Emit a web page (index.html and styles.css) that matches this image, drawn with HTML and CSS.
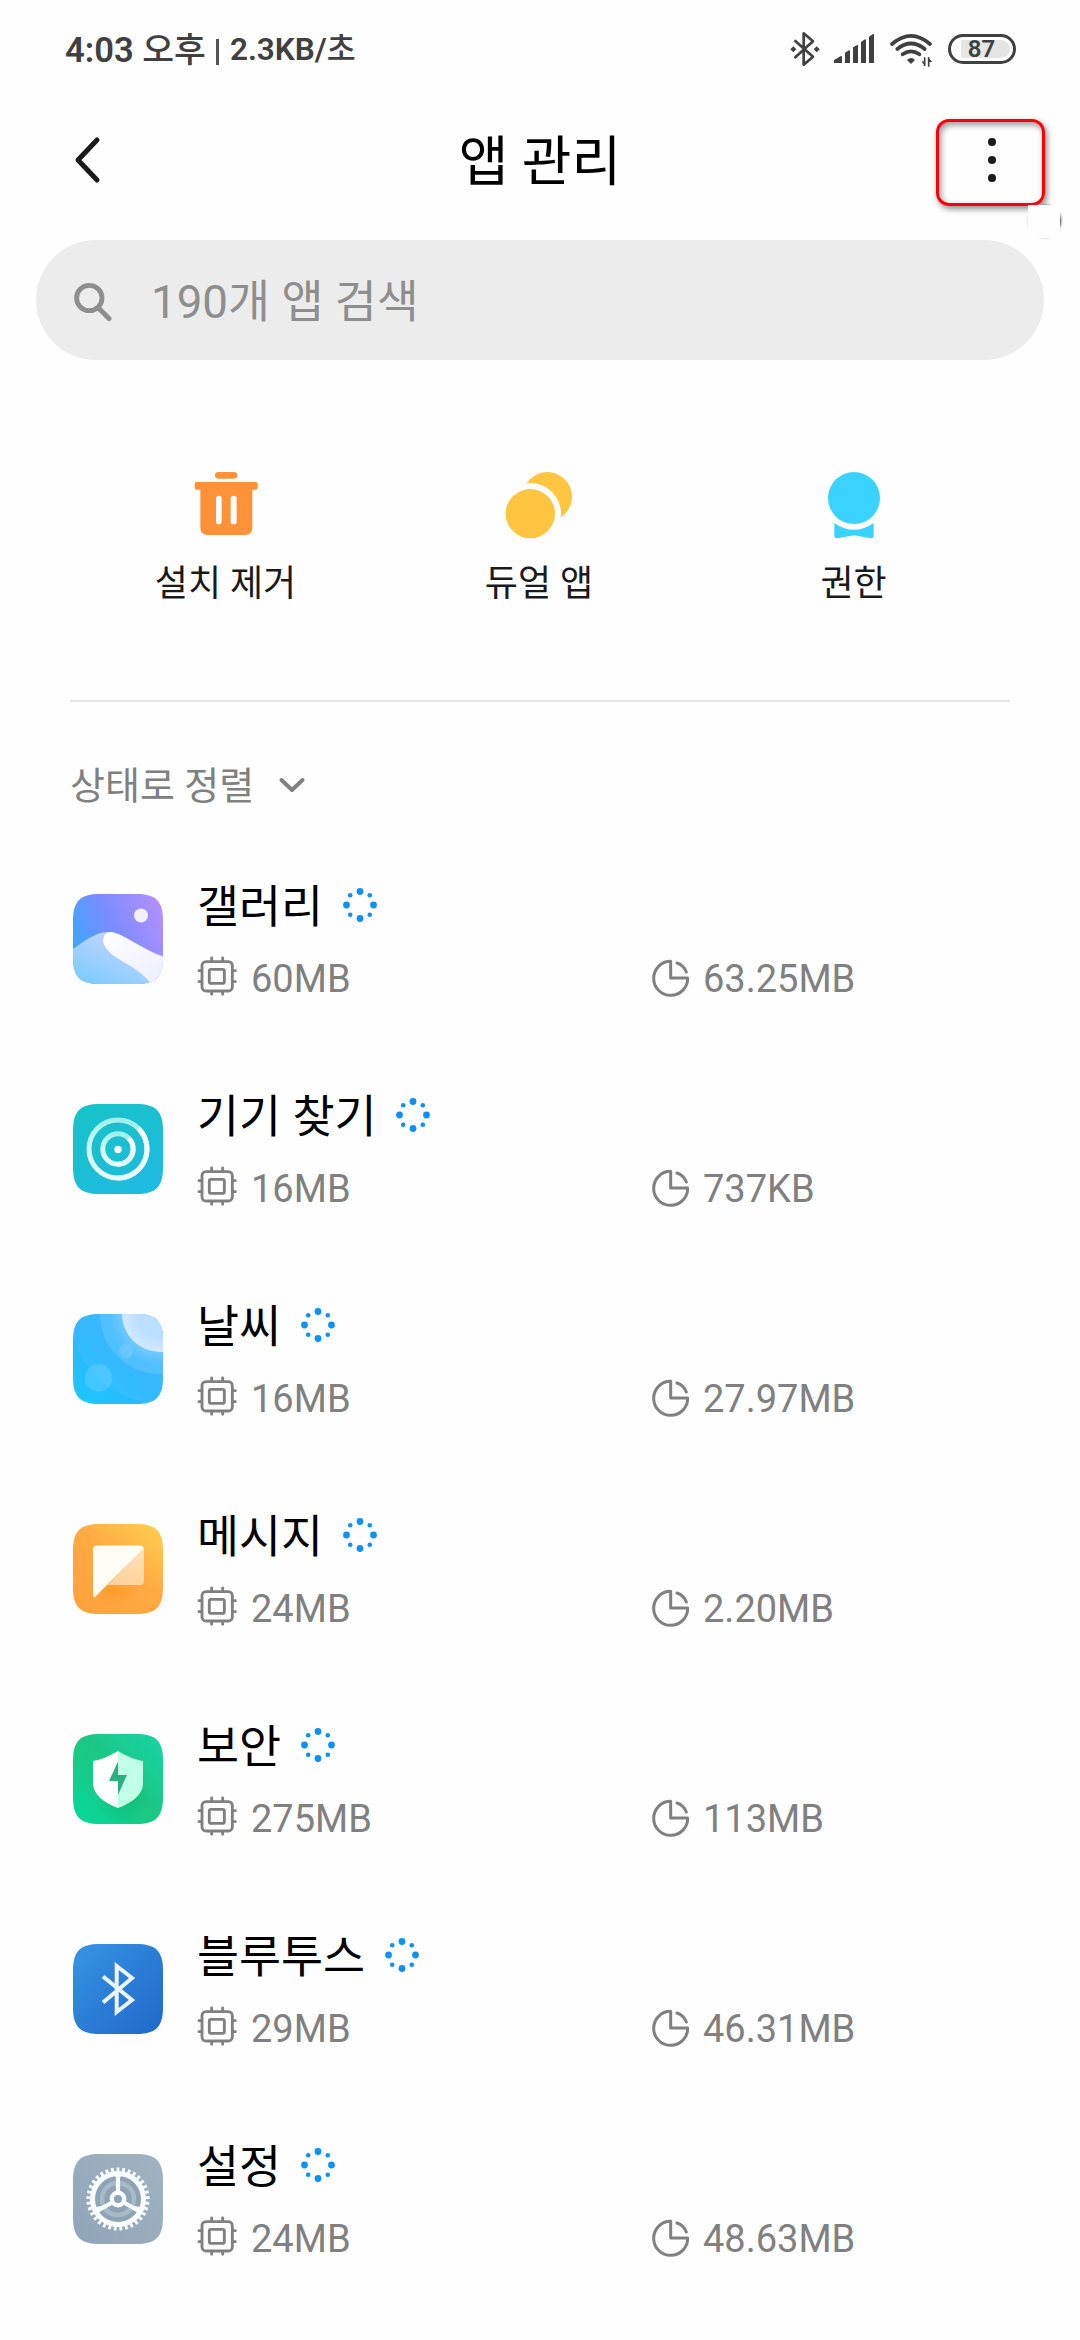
FILE: index.html
```html
<!DOCTYPE html>
<html lang="ko">
<head>
<meta charset="utf-8">
<title>앱 관리</title>
<link rel="stylesheet" href="styles.css">
</head>
<body>
<svg class="defs" aria-hidden="true">
  <defs>
    <symbol id="spin" viewBox="0 0 36 36">
      <g fill="#0d92f4"><circle cx="18" cy="4.5" r="3.4"/><circle cx="18" cy="31.5" r="3.4"/><circle cx="4.5" cy="18" r="3.4"/><circle cx="31.5" cy="18" r="3.4"/>
      <circle cx="8.2" cy="8.2" r="2.3"/><circle cx="27.8" cy="8.2" r="2.3"/><circle cx="8.2" cy="27.8" r="2.3"/><circle cx="27.8" cy="27.8" r="2.3"/></g>
    </symbol>
    <symbol id="chip" viewBox="441 829 120 120">
      <g fill="none" stroke="#808080" stroke-width="8.6" stroke-linecap="round">
        <rect x="456" y="846" width="91" height="88" rx="12"/><rect x="478" y="869" width="45" height="42" rx="5"/>
        <path d="M485 835V845M518 835V845M485 935V944M518 935V944M447 873H455M447 906H455M548 873H556M548 906H556"/>
      </g>
    </symbol>
    <symbol id="pie" viewBox="87 48 120 120">
      <g fill="none" stroke="#808080" stroke-width="9" stroke-linecap="round" stroke-linejoin="round">
        <path d="M152 61V111H203A51 51 0 1 1 152 61M171 66A46 46 0 0 1 199 93"/>
      </g>
    </symbol>
    <clipPath id="tile"><path d="M0 27C0 7 7 0 27 0H63C83 0 90 7 90 27V63C90 83 83 90 63 90H27C7 90 0 83 0 63Z"/></clipPath>
    <linearGradient id="gal" x1="0" y1=".55" x2="1" y2=".1"><stop offset="0" stop-color="#3da5ff"/><stop offset=".45" stop-color="#7c8cff"/><stop offset="1" stop-color="#b78fff"/></linearGradient>
    <linearGradient id="hill" x1="0" y1="1" x2=".8" y2="0"><stop offset="0" stop-color="#74caff"/><stop offset="1" stop-color="#d6d6ff"/></linearGradient>
    <linearGradient id="dune" x1="0" y1="0" x2=".6" y2="1"><stop offset="0" stop-color="#fff"/><stop offset="1" stop-color="#eef0ff"/></linearGradient>
    <linearGradient id="find" x1="0" y1="0" x2=".6" y2="1"><stop offset="0" stop-color="#16c3c8"/><stop offset=".5" stop-color="#1abfd0"/><stop offset="1" stop-color="#1dbbe0"/></linearGradient>
    <linearGradient id="ring" x1=".7" y1="0" x2=".4" y2="1"><stop offset="0" stop-color="#9eefe6"/><stop offset="1" stop-color="#e8fdff"/></linearGradient>
    <linearGradient id="ringB" x1="0" y1="0" x2="0" y2="1"><stop offset="0" stop-color="#fff"/><stop offset="1" stop-color="#e2fbff"/></linearGradient>
    <linearGradient id="sky" x1="0" y1="1" x2=".8" y2="0"><stop offset="0" stop-color="#1cc8ff"/><stop offset=".5" stop-color="#2ab6ff"/><stop offset="1" stop-color="#36b4ff"/></linearGradient>
    <linearGradient id="msg" x1=".2" y1="1" x2="1" y2="0"><stop offset="0" stop-color="#ffa23c"/><stop offset=".5" stop-color="#feaa43"/><stop offset="1" stop-color="#ffd150"/></linearGradient>
    <linearGradient id="fold" x1="0" y1="0" x2="0" y2="1"><stop offset="0" stop-color="#fee2bd"/><stop offset="1" stop-color="#fed29c"/></linearGradient>
    <linearGradient id="safe" x1="0" y1="1" x2="1" y2="0"><stop offset="0" stop-color="#04da9a"/><stop offset=".5" stop-color="#1cc684"/><stop offset="1" stop-color="#17d4a4"/></linearGradient>
    <linearGradient id="blue" x1="0" y1="0" x2="1" y2="1"><stop offset="0" stop-color="#3696e4"/><stop offset=".5" stop-color="#2b7dd6"/><stop offset="1" stop-color="#2069c8"/></linearGradient>
    <linearGradient id="set" x1="0" y1="1" x2="1" y2="0"><stop offset="0" stop-color="#90a5b8"/><stop offset="1" stop-color="#a0b3c2"/></linearGradient>
    <radialGradient id="shade"><stop offset="0" stop-color="#00a860" stop-opacity=".4"/><stop offset="1" stop-color="#00a860" stop-opacity="0"/></radialGradient>
    <radialGradient id="shadeO"><stop offset="0" stop-color="#ff8f10" stop-opacity=".45"/><stop offset="1" stop-color="#ff8f10" stop-opacity="0"/></radialGradient>
    <radialGradient id="sun" cx=".5" cy=".5" r=".5"><stop offset=".6" stop-color="#bcdfff"/><stop offset="1" stop-color="#d2eaff"/></radialGradient>
    <radialGradient id="glow"><stop offset=".65" stop-color="#8fd2ff" stop-opacity=".7"/><stop offset="1" stop-color="#8fd2ff" stop-opacity="0"/></radialGradient>
  </defs>
</svg>

<header class="status">
  <div class="clock"><span class="time">4:03 <span class="ko">오후</span></span><span class="bar"></span><span class="speed">2.3KB/<span class="ko">초</span></span></div>
  <div class="signals">
    <svg class="bt" viewBox="60 63 90 108"><path d="M76 93L129 140L101 164V70L129 94L76 142" fill="none" stroke="#404040" stroke-width="8" stroke-linejoin="round" stroke-linecap="round"/><path d="M61 118L70 109L79 118L70 127ZM131 118L140 109L149 118L140 127Z" fill="#404040"/></svg>
    <svg class="cell" viewBox="192 63 120 108"><path d="M192 159V150L213 138Q216 137 216 141V159ZM225 159V128L237 121Q240 120 240 124V159ZM249 159V112L261 105Q264 104 264 108V159ZM273 159V96L285 88Q288 87 288 91V159ZM297 159V80L309 72Q312 71 312 75V159Z" fill="#404040"/></svg>
    <svg class="wifi" viewBox="360 63 132 108"><g fill="none" stroke="#404040" stroke-width="11" stroke-linecap="round"><path d="M366 102Q423 53 480 102M382 117Q423 84 464 117M398 133Q423 115 448 133"/></g><path d="M411 150Q423 138 435 150L423 162Z" fill="#404040"/><path d="M464 142V168M476 142V170" stroke="#404040" stroke-width="5"/><path d="M455 155L465 168V152ZM474 142L487 156H474Z" fill="#404040"/></svg>
    <div class="battery"><div class="level">87</div></div>
  </div>
</header>

<nav class="titlebar">
  <svg class="back" viewBox="0 0 28 50"><path d="M24 5L5 25L24 45" fill="none" stroke="#1a1a1a" stroke-width="5" stroke-linecap="round" stroke-linejoin="round"/></svg>
  <h1 class="title">앱 관리</h1>
  <div class="menu"><i></i><i></i><i></i><b class="handle"></b></div>
</nav>

<div class="search">
  <svg class="lens" viewBox="0 0 40 40"><circle cx="16.3" cy="16" r="12.7" fill="none" stroke="#8e8e8e" stroke-width="4.8"/><path d="M25.5 26L36 36.5" stroke="#8e8e8e" stroke-width="5" stroke-linecap="round"/></svg>
  <span class="hint">190개 앱 검색</span>
</div>

<section class="actions">
  <div class="action"><svg viewBox="148 60 216 216"><g fill="#ff9138"><rect x="223" y="66" width="67" height="20" rx="10"/><path fill-rule="evenodd" d="M168 96H345Q351 96 351 102V113Q351 119 345 119H335V232Q335 255 312 255H202Q179 255 179 232V119H168Q162 119 162 113V102Q162 96 168 96ZM226 145V215Q226 223 234 223T243 215V145Q243 137 235 137T226 145ZM270 145V215Q270 223 279 223T288 215V145Q288 137 279 137T270 145Z"/></g></svg><span>설치 제거</span></div>
  <div class="action"><svg viewBox="1089 60 216 216"><circle cx="1222" cy="140" r="74" fill="#ffc541"/><circle cx="1171" cy="191" r="92" fill="#fefefe"/><circle cx="1171" cy="191" r="74" fill="#ffc541"/></svg><span>듀얼 앱</span></div>
  <div class="action"><svg viewBox="171 60 216 216"><circle cx="279" cy="144" r="78" fill="#3ad3ff"/><path d="M220 219Q279 260 338 219V258Q338 266 329 265L279 256L229 265Q220 266 220 258Z" fill="#3ad3ff"/></svg><span>권한</span></div>
</section>

<div class="sort"><span>상태로 정렬</span><svg viewBox="0 0 28 18"><path d="M3.5 4L14 14L24.5 4" fill="none" stroke="#808080" stroke-width="4" stroke-linecap="round" stroke-linejoin="round"/></svg></div>

<main class="list">
  <article class="row">
    <svg class="icon" viewBox="0 0 90 90"><g clip-path="url(#tile)"><rect width="90" height="90" fill="url(#gal)"/><circle cx="68" cy="21.5" r="7" fill="#f3efff"/><path d="M0 55C16 43 27 37 37 38C50 39 66 54 90 62V90H0Z" fill="url(#hill)"/><path d="M37 38C50 39 68 55 90 63V90H78C65 70 33 65 30 47Q30 39 37 38Z" fill="url(#dune)"/></g></svg>
    <div class="name"><span>갤러리</span><svg class="spin"><use href="#spin"/></svg></div>
    <div class="meta ram"><svg><use href="#chip"/></svg><span>60MB</span></div>
    <div class="meta disk"><svg><use href="#pie"/></svg><span>63.25MB</span></div>
  </article>
  <article class="row">
    <svg class="icon" viewBox="0 0 90 90"><g clip-path="url(#tile)"><rect width="90" height="90" fill="url(#find)"/></g><g fill="none" stroke-width="5"><circle cx="45" cy="45" r="29" stroke="url(#ring)"/><path d="M65.5 24.5A29 29 0 0 1 45 74" stroke="url(#ringB)"/><circle cx="45" cy="45" r="15.2" stroke="url(#ring)"/><path d="M55.7 34.3A15.2 15.2 0 0 1 45 60.2" stroke="url(#ringB)"/></g><circle cx="45" cy="45.5" r="3.7" fill="#fff"/></svg>
    <div class="name"><span>기기 찾기</span><svg class="spin"><use href="#spin"/></svg></div>
    <div class="meta ram"><svg><use href="#chip"/></svg><span>16MB</span></div>
    <div class="meta disk"><svg><use href="#pie"/></svg><span>737KB</span></div>
  </article>
  <article class="row">
    <svg class="icon" viewBox="0 0 90 90"><g clip-path="url(#tile)"><rect width="90" height="90" fill="url(#sky)"/><circle cx="89" cy="-2" r="92" fill="#fff" opacity=".05"/><circle cx="87" cy="0" r="60" fill="#fff" opacity=".12"/><circle cx="87" cy="0" r="50" fill="url(#glow)"/><circle cx="87" cy="0" r="38" fill="url(#sun)"/><circle cx="53" cy="37" r="7" fill="#8bd0ff" opacity=".4"/><circle cx="25.5" cy="64" r="13.7" fill="#8bdcff" opacity=".3"/></g></svg>
    <div class="name"><span>날씨</span><svg class="spin"><use href="#spin"/></svg></div>
    <div class="meta ram"><svg><use href="#chip"/></svg><span>16MB</span></div>
    <div class="meta disk"><svg><use href="#pie"/></svg><span>27.97MB</span></div>
  </article>
  <article class="row">
    <svg class="icon" viewBox="0 0 90 90"><g clip-path="url(#tile)"><rect width="90" height="90" fill="url(#msg)"/><ellipse cx="42" cy="66" rx="24" ry="14" fill="url(#shadeO)"/></g><path d="M70 24L35 61H67Q71 61 71 57V25Z" fill="url(#fold)"/><path d="M24 21.5H67Q70 21.5 71 24L22 73Q20 74 20 72V25.5Q20 21.5 24 21.5Z" fill="#fffcf5"/></svg>
    <div class="name"><span>메시지</span><svg class="spin"><use href="#spin"/></svg></div>
    <div class="meta ram"><svg><use href="#chip"/></svg><span>24MB</span></div>
    <div class="meta disk"><svg><use href="#pie"/></svg><span>2.20MB</span></div>
  </article>
  <article class="row">
    <svg class="icon" viewBox="0 0 90 90"><g clip-path="url(#tile)"><rect width="90" height="90" fill="url(#safe)"/><circle cx="50" cy="62" r="28" fill="url(#shade)"/></g><path d="M45 17Q32 25 20 27V50Q21 65 45 74Z" fill="#fff"/><path d="M45 17Q58 25 70 27V50Q69 65 45 74Z" fill="#c2ffe8"/><path d="M45 27.5L36 47H45V61L54 41H45Z" fill="#2bb081"/></svg>
    <div class="name"><span>보안</span><svg class="spin"><use href="#spin"/></svg></div>
    <div class="meta ram"><svg><use href="#chip"/></svg><span>275MB</span></div>
    <div class="meta disk"><svg><use href="#pie"/></svg><span>113MB</span></div>
  </article>
  <article class="row">
    <svg class="icon" viewBox="0 0 90 90"><g clip-path="url(#tile)"><rect width="90" height="90" fill="url(#blue)"/></g><path d="M30 32.5L59 56L43.7 68V22L59 34L30 58.5" fill="none" stroke="#eaf5ff" stroke-width="4"/></svg>
    <div class="name"><span>블루투스</span><svg class="spin"><use href="#spin"/></svg></div>
    <div class="meta ram"><svg><use href="#chip"/></svg><span>29MB</span></div>
    <div class="meta disk"><svg><use href="#pie"/></svg><span>46.31MB</span></div>
  </article>
  <article class="row">
    <svg class="icon" viewBox="0 0 90 90"><g clip-path="url(#tile)"><rect width="90" height="90" fill="url(#set)"/></g><g fill="none"><circle cx="45" cy="45" r="23" fill="#8ea4b5"/><circle cx="45" cy="45" r="16" stroke="#a7bac7" stroke-width="4.5"/><circle cx="45" cy="45" r="29.3" stroke="#fafdff" stroke-width="4.6" pathLength="66" stroke-dasharray="1 1" stroke-dashoffset=".5" transform="rotate(-90 45 45)"/><circle cx="45" cy="45" r="25.5" stroke="#fafdff" stroke-width="5"/><circle cx="45" cy="45" r="6.2" stroke="#fafdff" stroke-width="4.4"/><path d="M45 39V22M50 48L65 56.5M40 48L25 56.5" stroke="#fafdff" stroke-width="4.2"/><path d="M41 21H49L45 26ZM62 52L67 53L64 60ZM28 52L23 53L26 60Z" fill="#fafdff"/></g></svg>
    <div class="name"><span>설정</span><svg class="spin"><use href="#spin"/></svg></div>
    <div class="meta ram"><svg><use href="#chip"/></svg><span>24MB</span></div>
    <div class="meta disk"><svg><use href="#pie"/></svg><span>48.63MB</span></div>
  </article>
</main>
</body>
</html>
```
FILE: styles.css
```css
* { box-sizing: border-box; }
body {
  margin: 0;
  width: 1080px;
  height: 2340px;
  overflow: hidden;
  background: #fefefe;
  color: #000;
  font-family: Roboto, "Noto Sans CJK KR", sans-serif;
}
svg { display: block; flex: none; }
.defs { position: absolute; width: 0; height: 0; }

.status {
  display: flex;
  justify-content: space-between;
  height: 100px;
  padding: 31px 64px 0 65px;
  color: #404040;
}
.clock { display: flex; align-items: center; height: 38px; font-weight: 600; white-space: nowrap; }
.ko { font-weight: 500; }
.time { font-size: 34.6px; line-height: 38px; }
.bar { width: 3px; height: 26px; margin: 4px 11px 0 10px; background: #555; }
.speed { font-size: 31.5px; line-height: 38px; }
.signals { display: flex; height: 36px; }
.bt { width: 30px; height: 36px; }
.cell { width: 40px; height: 36px; margin-left: 14px; }
.wifi { width: 44px; height: 36px; margin-left: 16px; }
.battery {
  width: 68px;
  height: 30px;
  margin: 3px 0 0 14px;
  padding: 3px 3px 3px 10px;
  border: 3px solid #404040;
  border-radius: 15px;
}
.level {
  height: 18px;
  padding-right: 8px;
  border-radius: 2px 9px 9px 2px;
  background: #e5e5e5;
  color: #404040;
  font-size: 24px;
  font-weight: 600;
  line-height: 19px;
  text-align: center;
}

.titlebar {
  display: flex;
  align-items: flex-start;
  justify-content: space-between;
  height: 140px;
  padding: 19px 35px 0 73px;
}
.back { width: 28px; height: 50px; margin-top: 16px; margin-right: 43px; }
.title { margin: 0; padding-top: 4px; font-size: 54px; font-weight: 400; line-height: 80px; }
.menu {
  position: relative;
  display: flex;
  flex-direction: column;
  align-items: center;
  gap: 10px;
  width: 109px;
  height: 87px;
  padding: 16px 0 0 3px;
  border: 3px solid #fb0007;
  border-radius: 13px;
  box-shadow: 2px 3px 6px rgba(0,0,0,.45), inset 2px 3px 6px rgba(0,0,0,.4);
}
.menu i { width: 8px; height: 8px; border-radius: 50%; background: #1a1a1a; }
.handle {
  position: absolute;
  left: 89px;
  top: 83px;
  width: 32px;
  height: 33px;
  background: #fefefe;
}
.handle::before {
  content: "";
  position: absolute;
  z-index: -1;
  left: 1px;
  top: 0;
  width: 32px;
  height: 32px;
  border-radius: 50%;
  background: #777;
  box-shadow: 0 0 3px rgba(0,0,0,.6);
}

.search {
  display: flex;
  align-items: center;
  height: 120px;
  margin: 0 36px;
  padding-left: 37px;
  border-radius: 60px;
  background: #ececec;
}
.lens { width: 40px; height: 40px; margin-top: 3px; }
.hint { margin-left: 38px; padding-top: 6px; color: #8e8e8e; font-size: 45.7px; line-height: 60px; }

.actions {
  display: grid;
  grid-template-columns: 311px 316px 313px;
  height: 342px;
  margin: 0 70px;
  padding-top: 110px;
  border-bottom: 2px solid #e5e5e5;
}
.action { display: flex; flex-direction: column; align-items: center; gap: 17px; color: #1a1a1a; font-size: 36px; line-height: 50px; }
.action svg { width: 72px; height: 72px; }

.sort { display: flex; align-items: center; gap: 24px; height: 132px; padding: 34px 0 0 70px; color: #808080; font-size: 38px; line-height: 50px; }
.sort span { padding-top: 2px; }
.sort svg { width: 28px; height: 18px; }

.row {
  display: grid;
  grid-template-columns: 124px 452px 1fr;
  grid-template-rows: 60px 40px;
  row-gap: 21px;
  height: 210px;
  padding: 42px 0 0 73px;
}
.icon { grid-row: 1 / 3; width: 90px; height: 90px; margin-top: 18px; }
.name { grid-column: 2 / 4; display: flex; align-items: center; gap: 19px; height: 58px; font-size: 45.7px; line-height: 58px; }
.name span { padding-top: 5px; }
.spin { width: 36px; height: 36px; }
.meta { display: flex; gap: 14px; color: #808080; font-size: 38px; line-height: 44px; }
.meta svg { width: 40px; height: 40px; }
.ram { grid-column: 2; }
.disk { grid-column: 3; }
.ram svg { margin-top: -1px; }
```
